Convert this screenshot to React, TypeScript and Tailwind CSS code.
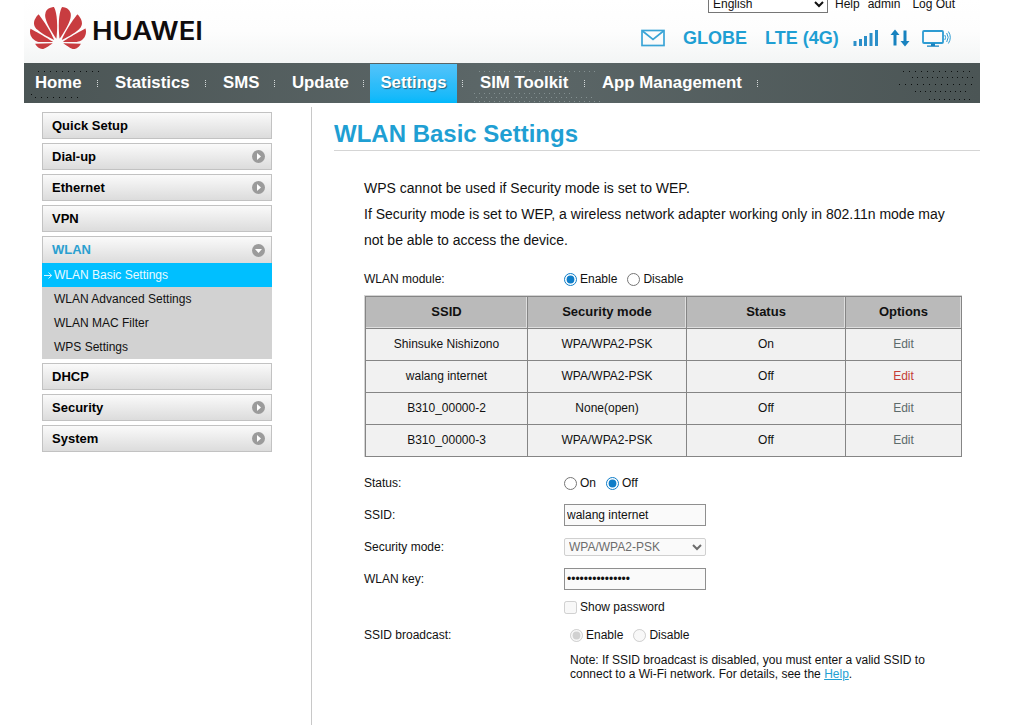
import React, { useState } from "react";
import { SiHuawei } from "react-icons/si";

const navItems = [
  { label: "Home", width: "w-[80px]" },
  { label: "Statistics", width: "w-[108px]" },
  { label: "SMS", width: "w-[69px]" },
  { label: "Update", width: "w-[89px]" },
  { label: "Settings", width: "w-[99px]" },
  { label: "SIM Toolkit", width: "w-[122px]" },
  { label: "App Management", width: "w-[173px]" },
];

const wlanPages = [
  "WLAN Basic Settings",
  "WLAN Advanced Settings",
  "WLAN MAC Filter",
  "WPS Settings",
];

const networks = [
  { ssid: "Shinsuke Nishizono", security: "WPA/WPA2-PSK", status: "On" },
  { ssid: "walang internet", security: "WPA/WPA2-PSK", status: "Off" },
  { ssid: "B310_00000-2", security: "None(open)", status: "Off" },
  { ssid: "B310_00000-3", security: "WPA/WPA2-PSK", status: "Off" },
];

const StatusIcons: React.FC = () => (
  <>
    {/* signal */}
    <svg width="26" height="18" viewBox="0 0 26 18" className="ml-[15px]" fill="#2b8fc9">
      <rect x="0.5" y="12" width="3" height="5" />
      <rect x="6" y="10" width="3" height="7" />
      <rect x="11" y="7" width="3" height="10" />
      <rect x="16.5" y="4" width="3" height="13" />
      <rect x="22" y="1" width="3" height="16" />
    </svg>
    {/* up / down */}
    <svg width="20" height="18" viewBox="0 0 20 18" className="ml-[11px]" fill="#1782bf">
      <path d="M5 0.5 9.5 6H6.5V16.5H3.5V6H0.5Z" />
      <path d="M15 17.5 10.5 12H13.5V1.5H16.5V12H19.5Z" />
    </svg>
    {/* connected device */}
    <svg width="29" height="19" viewBox="0 0 29 19" className="ml-[12px]" fill="none" stroke="#2d9bd2">
      <rect x="1" y="2" width="20" height="12" rx="1" strokeWidth="1.8" />
      <path d="M9 14.5h4v2h4v1.2H5v-1.2h4z" fill="#1782bf" stroke="none" />
      <path d="M22.8 6q1.6 2.4 0 5M24.7 4q3 4.2 0 9M26.4 2.5q3.8 5.8 0 12" strokeWidth="1" />
    </svg>
  </>
);

const Header: React.FC = () => (
  <header className="flex h-[63px] justify-between overflow-hidden bg-linear-to-b from-white via-[#fdfdfd] to-[#f3f5f5]">
    <div className="flex items-start pl-[6px]">
      <SiHuawei size={56} color="#c83c40" />
      <svg width="112" height="28" className="mt-[17px] ml-[6px]">
        <text
          x="0"
          y="22.5"
          textLength="111"
          lengthAdjust="spacingAndGlyphs"
          fill="#100c0d"
          className="font-['Inter',sans-serif] text-[25px] font-semibold"
        >
          HUAWEI
        </text>
      </svg>
    </div>

    <div className="w-[340px]">
      <div className="-mt-[5px] flex h-[18px] items-center pl-[68px]">
        <select className="h-[18px] w-[120px] border border-[#767676] bg-white text-[12px]">
          <option>English</option>
        </select>
        <span className="ml-[7px]">Help</span>
        <span className="ml-[8px]">admin</span>
        <span className="ml-[12px]">Log Out</span>
      </div>
      <div className="mt-[14px] flex h-[22px] items-center text-[18px] font-bold text-[#1f9fd3]">
        <svg width="24" height="18" viewBox="0 0 24 18" className="ml-px" fill="none" stroke="#3aa4d6" strokeWidth="1.7">
          <rect x="1" y="1.5" width="22" height="15" />
          <path d="M1.5 2 12 10.5 22.5 2" />
        </svg>
        <span className="ml-[18px]">GLOBE</span>
        <span className="ml-[18px] -mr-px whitespace-nowrap">LTE (4G)</span>
        <StatusIcons />
      </div>
    </div>
  </header>
);

const Navbar: React.FC = () => (
  <nav className="relative flex h-[40px] bg-linear-to-r from-[#4b5555] via-[#5c6768] to-[#4b5555] text-[16.8px] font-bold text-white">
    {/* dotted texture */}
    <svg
      className="absolute inset-0"
      width="956"
      height="40"
      stroke="#0c0f0f"
      shapeRendering="crispEdges"
    >
      <path d="M14 8.5h64M7 31.5h3M11 34.5h48" strokeDasharray="1 5" />
      <path d="M879 8.5h69M875 21.5h74" strokeDasharray="1 5" />
      <path d="M888 14.5h62M891 28.5h54M905 36.5h41" strokeDasharray="1 4" />
      <path d="M455 8.5h120M450 30.5h100M452 34.5h120M450 38.5h130" stroke="#849091" strokeDasharray="1 4" />
    </svg>
    {navItems.map(({ label, width }) => (
      <div key={label} className={`relative flex items-center justify-between ${width}`}>
        <a
          href="#"
          className={
            label === "Settings"
              ? "flex h-[39px] w-[87px] items-center justify-center self-end bg-linear-to-b from-[#52c3fa] via-[#2fbdf9] via-50% to-[#00b8fb] pb-px [text-shadow:1px_1px_1px_#27607a]"
              : "pl-[11px] whitespace-nowrap"
          }
        >
          {label}
        </a>
        <span className="mr-[6px] h-[7px] w-px bg-[repeating-linear-gradient(#d5dada_0_1px,transparent_1px_2px)]" />
      </div>
    ))}
  </nav>
);

const MenuItem: React.FC<{ label: string; arrow?: "right" | "down" }> = ({
  label,
  arrow,
}) => (
  <a
    href="#"
    className={`flex h-[27px] items-center justify-between border border-[#c2c2c2] bg-linear-to-b from-[#fafafa] to-[#dcdcdc] pr-[6px] pl-[9px] text-[13px] font-bold ${
      arrow === "down" ? "border-b-0 text-[#2a9fd0]" : "text-black"
    }`}
  >
    {label}
    {arrow && (
      <svg width="13" height="13" viewBox="0 0 13 13">
        <circle cx="6.5" cy="6.5" r="6.5" fill="#9b9b9b" />
        <path d={arrow === "right" ? "M5 3v7l4-3.5z" : "M3 5h7l-3.5 4z"} fill="#fff" />
      </svg>
    )}
  </a>
);

const Sidebar: React.FC = () => (
  <aside className="flex w-[230px] flex-col gap-1 pt-[5px]">
    <MenuItem label="Quick Setup" />
    <MenuItem label="Dial-up" arrow="right" />
    <MenuItem label="Ethernet" arrow="right" />
    <MenuItem label="VPN" />
    <div>
      <MenuItem label="WLAN" arrow="down" />
      {wlanPages.map((page, i) => (
        <a
          key={page}
          href="#"
          className={`flex h-6 items-center ${
            i === 0 ? "bg-[#00bfff] pl-[2px] text-[#eafaff]" : "bg-[#d2d2d2] pl-3 text-[#111]"
          }`}
        >
          {i === 0 && (
            <svg width="10" height="9" viewBox="0 0 10 9" fill="none" stroke="#d9f5ff">
              <path d="M0 4.5h7.5M4.5 1.5l3.2 3-3.2 3" />
            </svg>
          )}
          {page}
        </a>
      ))}
    </div>
    <MenuItem label="DHCP" />
    <MenuItem label="Security" arrow="right" />
    <MenuItem label="System" arrow="right" />
  </aside>
);

interface RadioProps {
  name: string;
  label: string;
  checked: boolean;
  disabled?: boolean;
  onChange?: () => void;
}

const Radio: React.FC<RadioProps> = ({ name, label, checked, disabled, onChange }) => (
  <label className="mr-[10px] flex items-center gap-[3px]">
    <input
      type="radio"
      name={name}
      checked={checked}
      disabled={disabled}
      onChange={onChange ?? (() => {})}
      className="m-0 h-[13px] w-[13px] accent-[#0f7dc8]"
    />
    {label}
  </label>
);

const Row: React.FC<{ label: string; children: React.ReactNode; className?: string }> = ({
  label,
  children,
  className = "h-8",
}) => (
  <div className={`flex items-center ${className}`}>
    <div className="w-[200px]">{label}</div>
    {children}
  </div>
);

const WlanSettings: React.FC = () => {
  const [enabled, setEnabled] = useState(true);
  const [on, setOn] = useState(false);
  const [ssid, setSsid] = useState("walang internet");
  const [selected, setSelected] = useState(1);

  return (
    <main className="ml-[22px] w-[646px]">
      <h1 className="h-[44px] border-b border-[#d5d5d5] pt-[9px] text-[24px] leading-[36px] font-bold text-[#1f9fd3]">
        WLAN Basic Settings
      </h1>
      <div className="ml-[30px] w-[598px] pt-6">
        <p className="text-[14px] leading-[26px]">
          WPS cannot be used if Security mode is set to WEP.
          <br />
          If Security mode is set to WEP, a wireless network adapter working only in 802.11n mode may
          not be able to access the device.
        </p>

        <Row label="WLAN module:" className="mt-[10px] h-[32px]">
          <Radio name="module" label="Enable" checked={enabled} onChange={() => setEnabled(true)} />
          <Radio name="module" label="Disable" checked={!enabled} onChange={() => setEnabled(false)} />
        </Row>

        <div className="border-t border-l border-[#d4d4d4]">
          <table className="w-[597px] table-fixed border-collapse border border-[#858585] text-center">
            <colgroup>
              <col className="w-[162px]" />
              <col className="w-[159px]" />
              <col className="w-[159px]" />
              <col />
            </colgroup>
            <thead>
              <tr className="h-8 bg-[#bababa] text-[13px]">
                {["SSID", "Security mode", "Status", "Options"].map((h) => (
                  <th
                    key={h}
                    className="border border-[#858585] p-0 pb-[2px] shadow-[inset_-1px_-1px_#dedede]"
                  >
                    {h}
                  </th>
                ))}
              </tr>
            </thead>
            <tbody>
              {networks.map((n, i) => (
                <tr key={n.ssid} className="h-8 bg-[#f1f1f1]">
                  <td className="border border-[#858585] p-0 pb-[2px]">{n.ssid}</td>
                  <td className="border border-[#858585] p-0 pb-[2px]">{n.security}</td>
                  <td className="border border-[#858585] p-0 pb-[2px]">{n.status}</td>
                  <td
                    className={`cursor-pointer border border-[#858585] p-0 pb-[2px] ${
                      i === selected ? "text-[#c43c35]" : "text-[#5c6b6b]"
                    }`}
                    onClick={() => setSelected(i)}
                  >
                    Edit
                  </td>
                </tr>
              ))}
            </tbody>
          </table>
        </div>

        <div className="pt-[10px]">
          <Row label="Status:">
            <Radio name="status" label="On" checked={on} onChange={() => setOn(true)} />
            <Radio name="status" label="Off" checked={!on} onChange={() => setOn(false)} />
          </Row>
          <Row label="SSID:">
            <input
              value={ssid}
              onChange={(e) => setSsid(e.target.value)}
              className="h-[22px] w-[142px] border border-[#8f8f8f] bg-[#fafafa] px-[2px]"
            />
          </Row>
          <Row label="Security mode:">
            <select
              disabled
              className="h-[18px] w-[142px] rounded-xs border border-[#d0d0d0] bg-[#fafafa] text-[12px] text-[#6d6d6d]"
            >
              <option>WPA/WPA2-PSK</option>
            </select>
          </Row>
          <Row label="WLAN key:">
            <input
              type="password"
              defaultValue="123456789012345"
              className="h-[22px] w-[142px] border border-[#8f8f8f] bg-[#fafafa] px-[2px]"
            />
          </Row>
          <Row label="" className="h-6">
            <label className="flex items-center gap-[3px]">
              <input type="checkbox" disabled className="m-0 h-[13px] w-[13px]" />
              Show password
            </label>
          </Row>
          <Row label="SSID broadcast:" className="h-8">
            <div className="flex pl-[6px]">
              <Radio name="broadcast" label="Enable" checked disabled />
              <Radio name="broadcast" label="Disable" checked={false} disabled />
            </div>
          </Row>
          <p className="mt-[2px] ml-[206px] w-[370px] leading-[14px]">
            Note: If SSID broadcast is disabled, you must enter a valid SSID to connect to a Wi-Fi
            network. For details, see the{" "}
            <a href="#" className="text-[#1f9fd3] underline">
              Help
            </a>
            .
          </p>
        </div>
      </div>
    </main>
  );
};

const App: React.FC = () => {
  return (
    <div className="h-[725px] w-[1011px] overflow-hidden bg-white pl-6 font-['Liberation_Sans',Arial,sans-serif] text-[12px] text-[#111]">
      <div className="flex h-full w-[956px] flex-col">
        <Header />
        <Navbar />
        <div className="flex min-h-0 flex-1 pt-1 pl-[18px]">
          <Sidebar />
          <div className="ml-[39px] w-px bg-[#c8c8c8]" />
          <WlanSettings />
        </div>
      </div>
    </div>
  );
};

export default App;
